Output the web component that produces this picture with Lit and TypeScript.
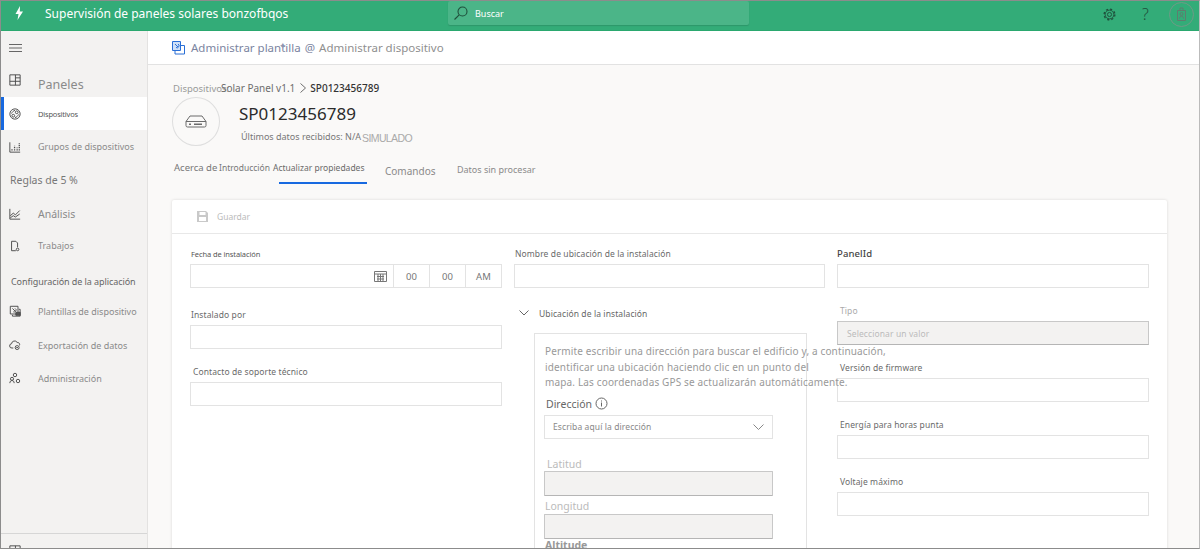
import { LitElement, html, css, svg } from 'lit';
import { customElement } from 'lit/decorators.js';

const icons: Record<string, unknown> = {
  panels: svg`<path d="M1 1h12v12H1zM1 8.500h12M7.500 1v12M7.500 4.500H13"/>`,
  devices: svg`<circle cx="7" cy="7" r="6"/><circle cx="5" cy="9" r="1.600"/><circle cx="9" cy="5" r="1.600"/><path d="M3 6.500c.8-2 2-3.200 4-3.700M11 7.500c-.8 2-2 3.200-4 3.700"/>`,
  groups: svg`<path d="M1 1.500V13h12"/><path d="M3.500 11V8.500M6.500 11V5.500M9.500 11V7.500M12 11V2.500" stroke-width="1.500" stroke-dasharray="1.500 1"/>`,
  chart: svg`<path d="M1 1v12h12M1.500 9l3.500-3 2.500 2L12.500 3M1.500 11.500 5 9l2.500 1.500L12.500 7"/>`,
  jobs: svg`<path d="M3 12.500V1.500h5l2 2v5M3 12.500h5"/><circle cx="10" cy="11" r="1.500"/>`,
  templates: svg`<path d="M1.500 1.500h9v9h-9z"/><path d="M4 11.500V13h9V5h-1.500M4 4l3 3M7 4a2 2 0 1 1-2 4"/><path fill="#555" d="M8 8.500h5V12H8z"/>`,
  cloud: svg`<path d="M5 10.500H3.500a2.500 2.500 0 0 1-.5-5A3.500 3.500 0 0 1 9.500 4a2.500 2.500 0 0 1 2.700 3.500"/><circle cx="9.500" cy="10" r="2.300"/><path d="M8.500 10h2"/>`,
  admin: svg`<circle cx="7" cy="3.500" r="2"/><circle cx="3.500" cy="8" r="1.800"/><path d="M1 13c0-2 1-3 2.500-3s2.500 1 2.500 3"/><circle cx="10.500" cy="10.500" r="2"/>`,
};

const navIcon = (name: string) =>
  html`<svg class="nav-icon" viewBox="0 0 14 14">${icons[name]}</svg>`;

@customElement('app-root')
export class AppRoot extends LitElement {
  static override styles = css`
    :host {
      display: block;
      height: 549px;
      overflow: hidden;
      font-family: 'Noto Sans', 'Open Sans', sans-serif;
      color: #666;
    }
    .app {
      box-sizing: border-box;
      height: 549px;
      overflow: hidden;
      display: flex;
      flex-direction: column;
      border: 1px solid #8c8c8c;
      border-right-color: #bbb;
    }
    .header {
      flex: none;
      height: 30px;
      background: #33ac78;
      display: flex;
      align-items: flex-start;
      color: #fff;
      border-bottom: 1px solid #2aa86f;
      box-sizing: border-box;
    }
    .bolt { width: 10px; height: 14px; margin: 5px 0 0 13px; flex: none; }
    .app-title { margin: 4px 0 0 21px; width: 403px; font-size: 12px; line-height: 18px; white-space: nowrap; }
    .search {
      width: 301px;
      height: 24px;
      background: #4bb588;
      border-radius: 2px;
      box-shadow: 0 1px 1px rgba(0, 0, 0, .12);
      display: flex;
      align-items: center;
      font-size: 9px;
      gap: 6px;
      padding-left: 5px;
      box-sizing: border-box;
    }
    .search svg { width: 16px; height: 16px; }
    .head-icons { margin-left: auto; display: flex; align-items: center; height: 26px; }
    .head-icons svg { display: block; }
    .gear { width: 13px; height: 13px; margin-right: 26px; }
    .help { font-size: 16px; line-height: 26px; color: #1f4f3b; width: 12px; margin-right: 15px; font-weight: 300; }
    .avatar {
      width: 23px;
      height: 23px;
      border: 1px solid #6f9a86;
      border-radius: 50%;
      margin-right: 5px;
      display: grid;
      place-items: center;
    }
    .body { flex: 1; display: flex; min-height: 0; }
    .side {
      flex: none;
      width: 146px;
      background: #f3f2f1;
      border-right: 1px solid #e3e2e1;
      display: flex;
      flex-direction: column;
      font-size: 9px;
      color: #8a8a8a;
    }
    .row { display: flex; align-items: center; flex: none; white-space: nowrap; box-sizing: border-box; padding-left: 8px; }
    .nav-icon { width: 12px; height: 12px; flex: none; margin-right: 17px; fill: none; stroke: #4a4a4a; stroke-width: 1.100; }
    .burger { height: 33px; }
    .burger svg { width: 13px; height: 10px; }
    .panels { height: 33px; padding-top: 7px; font-size: 12.500px; }
    .panels .nav-icon { margin-top: -9px; }
    .selected { height: 33px; background: #fff; color: #555; border-left: 3px solid #1769e0; padding-left: 5px; font-size: 7.500px; letter-spacing: -.2px; }
    .h33 { height: 33px; }
    .section { padding-left: 9px; font-size: 10.500px; color: #777; height: 34px; }
    .analysis { height: 34px; font-size: 10.500px; }
    .jobs { height: 29px; }
    .config { height: 36px; padding-top: 6px; padding-left: 10px; color: #666; letter-spacing: -.07px; }
    .templates { height: 30px; }
    .export { height: 38px; }
    .adm { height: 28px; }
    .side-foot { margin-top: auto; border-top: 1px solid #d6d6d6; height: 15px; padding-top: 11px; align-items: flex-start; overflow: hidden; }
    .main { flex: 1; min-width: 0; background: #faf9f8; display: flex; flex-direction: column; }
    .topbar {
      flex: none;
      height: 34px;
      background: #fff;
      border-bottom: 1px solid #e2e2e2;
      box-sizing: border-box;
      display: flex;
      align-items: center;
      padding-left: 24px;
      font-size: 11.500px;
      white-space: nowrap;
      color: #8f8f8f;
    }
    .topbar svg { width: 13px; height: 14px; margin-right: 6px; }
    .manage { color: #7b84a0; position: relative; }
    .manage i { position: absolute; left: 88px; top: -1px; font-style: normal; font-size: 9px; color: #8d96b0; }
    .at { color: #7b84a0; margin: 0 4px 0 4px; }
    .page { padding: 0 24px 0 24px; flex: 1; min-height: 0; }
    .crumb { display: flex; align-items: center; height: 18px; margin-top: 14px; font-size: 10px; white-space: nowrap; color: #6d6d6d; }
    .crumb .root { width: 48px; margin-left: 1px; color: #999; font-size: 9.500px; }
    .crumb b { font-weight: 500; color: #333; }
    .crumb svg { width: 6px; height: 10px; margin: 0 4px 0 5px; }
    .device { display: flex; height: 50px; }
    .disc {
      flex: none;
      box-sizing: border-box;
      width: 48px;
      height: 49px;
      border: 1px solid #dedede;
      border-radius: 50%;
      display: grid;
      place-items: center;
    }
    .disc svg { width: 22px; height: 13px; }
    .device-text { margin-left: 19px; }
    .device-text h1 { margin: 6px 0 0; font-size: 17px; line-height: 22px; font-weight: 400; color: #2b2b2b; }
    .meta { display: flex; margin: 5px 0 0 2px; font-size: 9px; line-height: 14px; white-space: nowrap; color: #777; }
    .meta span + span { margin-left: 1px; color: #aaa; letter-spacing: -.6px; font-family: 'Liberation Sans', sans-serif; font-size: 10.500px; margin-top: 1px; }
    .tabs { display: flex; align-items: flex-start; height: 39px; margin-top: 14px; padding-left: 2px; font-size: 8.500px; white-space: nowrap; color: #777; position: relative; }
    .tabs span { line-height: 14px; }
    .tabs .about { width: 45px; font-size: 9.500px; }
    .tabs .intro { width: 54px; }
    .tabs .active { width: 112px; color: #6a6a6a; }
    .tabs .cmd { width: 72px; font-size: 10px; margin-top: 3px; color: #8a8a8a; }
    .tabs .raw { margin-top: 2px; font-size: 9px; color: #8a8a8a; }
    .tabs .bar { position: absolute; left: 107px; top: 21px; width: 88px; height: 2px; background: #1769e0; }
    .card { background: #fff; box-shadow: 0 0 3px rgba(0, 0, 0, .14); margin-right: 8px; height: 400px; border-radius: 2px 2px 0 0; }
    .toolbar { height: 34px; box-sizing: border-box; border-bottom: 1px solid #e8e8e8; display: flex; align-items: center; padding-left: 25px; font-size: 8.500px; color: #bbb; }
    .toolbar svg { width: 11px; height: 11px; margin-right: 9px; }
    .form { display: grid; grid-template-columns: 312px 311px 312px; column-gap: 12px; padding: 12px 0 0 18px; font-size: 8.500px; letter-spacing: .1px; }
    .col-mid { position: relative; z-index: 1; }
    .field { margin-top: 15px; }
    .field:first-child { margin-top: 0; }
    .field.by { margin-top: 19px; }
    label { display: block; height: 18px; line-height: 16px; white-space: nowrap; color: #6a6a6a; padding-left: 1px; }
    .date-label { font-size: 7.500px; letter-spacing: -.1px; color: #555; }
    .nudge { padding-left: 3px; }
    .bold { font-size: 9.500px; font-weight: 500; color: #444; padding-left: 0; }
    .muted { color: #aaa; padding-left: 3px; }
    .input { height: 24px; box-sizing: border-box; border: 1px solid #e3e3e3; background: #fff; }
    .date { display: flex; }
    .date .input { display: grid; place-items: center; margin-left: -1px; color: #777; font-size: 9.500px; width: 37px; }
    .date .input:first-child { flex: 1; margin-left: 0; justify-items: end; padding-right: 6px; }
    .date svg { width: 13px; height: 12px; }
    .disabled { background: #f3f2f1; border: 1px solid #c8c8c8; border-bottom-color: #b5b5b5; color: #bbb; display: flex; align-items: center; padding-left: 9px; }
    .loc-head { display: flex; align-items: center; height: 20px; margin-top: 15px; color: #666; }
    .loc-head svg { width: 10px; height: 6px; margin: 0 10px 0 5px; }
    .loc-box { box-sizing: border-box; margin: 10px 0 0 20px; width: 273px; height: 300px; border: 1px solid #e3e3e3; padding: 10px 9px 0; }
    .loc-box p { margin: 0; padding-left: 1px; font-size: 10px; line-height: 15.500px; letter-spacing: .15px; white-space: nowrap; color: #999; }
    .addr { display: flex; align-items: center; height: 16px; margin: 5px 0 3px 2px; font-size: 10.500px; color: #666; letter-spacing: 0; }
    .addr svg { width: 13px; height: 13px; margin-left: 3px; }
    .addr-input { width: 229px; display: flex; align-items: center; justify-content: space-between; padding: 0 8px; color: #888; }
    .addr-input svg { width: 11px; height: 6px; }
    .geo { font-size: 10.500px; line-height: 15px; height: 14px; margin: 18px 0 0 3px; color: #bbb; letter-spacing: 0; }
    .geo.lng { height: 15px; margin: 3px 0 0 1px; }
    .geo.alt { height: 15px; margin: -1px 0 0 1px; font-weight: 700; color: #999; }
    .geo-input { width: 229px; height: 25px; padding: 0; border-radius: 1px; }
    svg.line { fill: none; stroke: currentColor; }
  `;

  override render() {
    return html`
      <div class="app">
        <div class="header">
          <svg class="bolt" viewBox="0 0 10 14"><path fill="#fff" d="M6 0 1.500 8h3L3.500 14 9 5.500H5.800z"/></svg>
          <div class="app-title">Supervisión de paneles solares bonzofbqos</div>
          <div class="search">
            <svg viewBox="0 0 16 16" fill="none" stroke="#1f4f3b" stroke-width="1.100"><circle cx="9.500" cy="6.500" r="4.500"/><path d="M6.200 9.800 1.500 14.500"/></svg>
            <span>Buscar</span>
          </div>
          <div class="head-icons">
            <svg class="gear" viewBox="0 0 14 14" fill="none" stroke="#1f4f3b"><circle cx="7" cy="7" r="2.200"/><circle cx="7" cy="7" r="4.700"/><circle cx="7" cy="7" r="5.800" stroke-width="1.400" stroke-dasharray="2.300 2.250"/></svg>
            <span class="help">?</span>
            <div class="avatar">
              <svg width="11" height="15" viewBox="0 0 11 15" fill="none" stroke="#5e7d6e"><path d="M1.500 3.500h8v10h-8zM4 3.500V1h3v2.500M3.500 11.500c0-3 4-3 4 0"/><circle cx="5.500" cy="7" r="1.500"/></svg>
            </div>
          </div>
        </div>
        <div class="body">
          <nav class="side">
            <div class="row burger">
              <svg viewBox="0 0 13 10" fill="none" stroke="#666"><path d="M0 1.500h13M0 5h13M0 8.500h13"/></svg>
            </div>
            <div class="row panels">${navIcon('panels')}Paneles</div>
            <div class="row selected">${navIcon('devices')}Dispositivos</div>
            <div class="row h33">${navIcon('groups')}Grupos de dispositivos</div>
            <div class="row section">Reglas de 5 %</div>
            <div class="row analysis">${navIcon('chart')}Análisis</div>
            <div class="row jobs">${navIcon('jobs')}Trabajos</div>
            <div class="row config">Configuración de la aplicación</div>
            <div class="row templates">${navIcon('templates')}Plantillas de dispositivo</div>
            <div class="row export">${navIcon('cloud')}Exportación de datos</div>
            <div class="row adm">${navIcon('admin')}Administración</div>
            <div class="row side-foot">${navIcon('panels')}Mis aplicaciones</div>
          </nav>
          <main class="main">
            <div class="topbar">
              <svg viewBox="0 0 13 14" fill="none" stroke="#2a6fd6"><path fill="#cfe0f7" d="M.500.500h8v9h-8z"/><path d="M3 10v3h9.500V4.500H9M3 3l3 3M6 3a2 2 0 1 1-2 3.500"/></svg>
              <span class="manage">Administrar plantilla<i>✦</i></span>
              <span class="at">@</span>
              <span>Administrar dispositivo</span>
            </div>
            <div class="page">
              <div class="crumb">
                <span class="root">Dispositivos:</span>
                <span>Solar Panel v1.1</span>
                <svg class="line" viewBox="0 0 6 10"><path d="m.5.500 5 4.500-5 4.500"/></svg>
                <b>SP0123456789</b>
              </div>
              <div class="device">
                <div class="disc">
                  <svg viewBox="0 0 22 13" fill="none" stroke="#6b6b6b"><path d="M5 1h12l4 5.500v4a1.500 1.500 0 0 1-1.500 1.500h-17A1.500 1.500 0 0 1 1 10.500v-4zM1 6.500h20"/><path d="M4 9.200h2M9 9.200h8" stroke-width="1.500"/></svg>
                </div>
                <div class="device-text">
                  <h1>SP0123456789</h1>
                  <div class="meta"><span>Últimos datos recibidos: N/A</span><span>SIMULADO</span></div>
                </div>
              </div>
              <div class="tabs">
                <span class="about">Acerca de</span>
                <span class="intro">Introducción</span>
                <span class="active">Actualizar propiedades</span>
                <span class="cmd">Comandos</span>
                <span class="raw">Datos sin procesar</span>
                <div class="bar"></div>
              </div>
              <section class="card">
                <div class="toolbar">
                  <svg viewBox="0 0 11 11" fill="#c9c9c9"><path d="M0 0h9l2 2v9H0zM2.500 1v3h6V1zM2 6v4h7V6z"/></svg>
                  Guardar
                </div>
                <div class="form">
                  <div class="col">
                    <div class="field">
                      <label class="date-label">Fecha de instalación</label>
                      <div class="date">
                        <div class="input">
                          <svg viewBox="0 0 13 12" fill="none" stroke="#777"><path d="M.500 1.500h12v10H.500zM.500 4h12M3 6.500h7M3 9h7M4 4v7.500M6.500 4v7.500M9 4v7.500"/></svg>
                        </div>
                        <div class="input">00</div>
                        <div class="input">00</div>
                        <div class="input">AM</div>
                      </div>
                    </div>
                    <div class="field by"><label>Instalado por</label><div class="input"></div></div>
                    <div class="field"><label class="nudge">Contacto de soporte técnico</label><div class="input"></div></div>
                  </div>
                  <div class="col col-mid">
                    <div class="field"><label>Nombre de ubicación de la instalación</label><div class="input"></div></div>
                    <div class="loc-head">
                      <svg class="line" viewBox="0 0 10 6"><path d="m.5.500 4.500 4.500 4.500-4.500"/></svg>
                      Ubicación de la instalación
                    </div>
                    <div class="loc-box">
                      <p>Permite escribir una dirección para buscar el edificio y, a continuación,</p>
                      <p>identificar una ubicación haciendo clic en un punto del</p>
                      <p>mapa. Las coordenadas GPS se actualizarán automáticamente.</p>
                      <div class="addr">Dirección
                        <svg class="line" viewBox="0 0 13 13"><circle cx="6.500" cy="6.500" r="5.500"/><path d="M6.500 5.500v4M6.500 3.500v1"/></svg>
                      </div>
                      <div class="input addr-input">
                        <span>Escriba aquí la dirección</span>
                        <svg class="line" viewBox="0 0 11 6"><path d="m.5.500 5 5 5-5"/></svg>
                      </div>
                      <div class="geo">Latitud</div>
                      <div class="input disabled geo-input"></div>
                      <div class="geo lng">Longitud</div>
                      <div class="input disabled geo-input"></div>
                      <div class="geo alt">Altitude</div>
                    </div>
                  </div>
                  <div class="col">
                    <div class="field"><label class="bold">PanelId</label><div class="input"></div></div>
                    <div class="field"><label class="muted">Tipo</label><div class="input disabled">Seleccionar un valor</div></div>
                    <div class="field"><label class="nudge">Versión de firmware</label><div class="input"></div></div>
                    <div class="field"><label class="nudge">Energía para horas punta</label><div class="input"></div></div>
                    <div class="field"><label class="nudge">Voltaje máximo</label><div class="input"></div></div>
                  </div>
                </div>
              </section>
            </div>
          </main>
        </div>
      </div>
    `;
  }
}
